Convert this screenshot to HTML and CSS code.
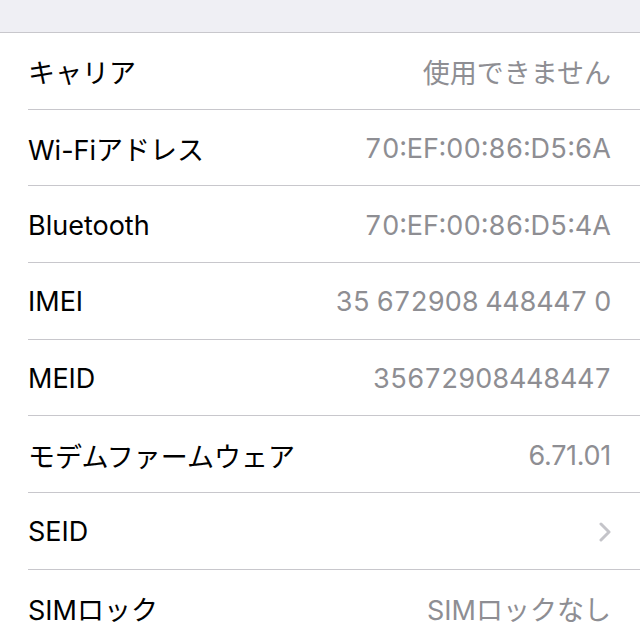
FILE: index.html
```html
<!DOCTYPE html>
<html lang="ja">

<head>
    <meta charset="UTF-8">
    <meta name="viewport" content="width=device-width, initial-scale=1.0">
    <title>情報</title>
    <link rel="stylesheet" href="styles.css">
</head>

<body>
    <div class="spacer"></div>

    <ul class="list">
        <li class="row">
            <div class="cell">
                <span class="label">キャリア</span>
                <span class="value">使用できません</span>
            </div>
        </li>
        <li class="row">
            <div class="cell">
                <span class="label">Wi-Fiアドレス</span>
                <span class="value">70:EF:00:86:D5:6A</span>
            </div>
        </li>
        <li class="row">
            <div class="cell">
                <span class="label">Bluetooth</span>
                <span class="value">70:EF:00:86:D5:4A</span>
            </div>
        </li>
        <li class="row">
            <div class="cell">
                <span class="label">IMEI</span>
                <span class="value num">35 672908 448447 0</span>
            </div>
        </li>
        <li class="row">
            <div class="cell">
                <span class="label">MEID</span>
                <span class="value num">35672908448447</span>
            </div>
        </li>
        <li class="row">
            <div class="cell">
                <span class="label">モデムファームウェア</span>
                <span class="value version">6.71.01</span>
            </div>
        </li>
        <li class="row">
            <div class="cell">
                <span class="label">SEID</span>
                <svg class="chevron" width="12" height="20" viewBox="0 0 12 20">
                    <path d="M2 2 L10 10 L2 18" fill="none" stroke="#c4c4c9" stroke-width="3"
                        stroke-linecap="round" stroke-linejoin="round" />
                </svg>
            </div>
        </li>
        <li class="row">
            <div class="cell">
                <span class="label">SIMロック</span>
                <span class="value">SIMロックなし</span>
            </div>
        </li>
    </ul>
</body>

</html>
```

FILE: styles.css
```css
html,
body {
    margin: 0;
    padding: 0;
}

body {
    font-family: "Inter", "Noto Sans CJK JP", sans-serif;
    background-color: #efeff4;
    color: #000;
    overflow: hidden;
}

.spacer {
    height: 32px;
}

.list {
    list-style: none;
    margin: 0;
    padding: 0;
    background-color: #fff;
    border-top: 1px solid #c8c7cc;
}

.row {
    padding-left: 28px;
}

.cell {
    height: 73.7px;
    padding: 2px 29px 0 0;
    display: flex;
    align-items: center;
    justify-content: space-between;
    border-bottom: 1px solid #c8c7cc;
    font-size: 27px;
}

.label {
    color: #000;
}

.value {
    color: #8e8e93;
    font-variant-numeric: tabular-nums;
}

.value.num {
    letter-spacing: -0.5px;
}

.value.version {
    font-variant-numeric: normal;
    letter-spacing: -0.3px;
}

.chevron {
    display: block;
}
```
